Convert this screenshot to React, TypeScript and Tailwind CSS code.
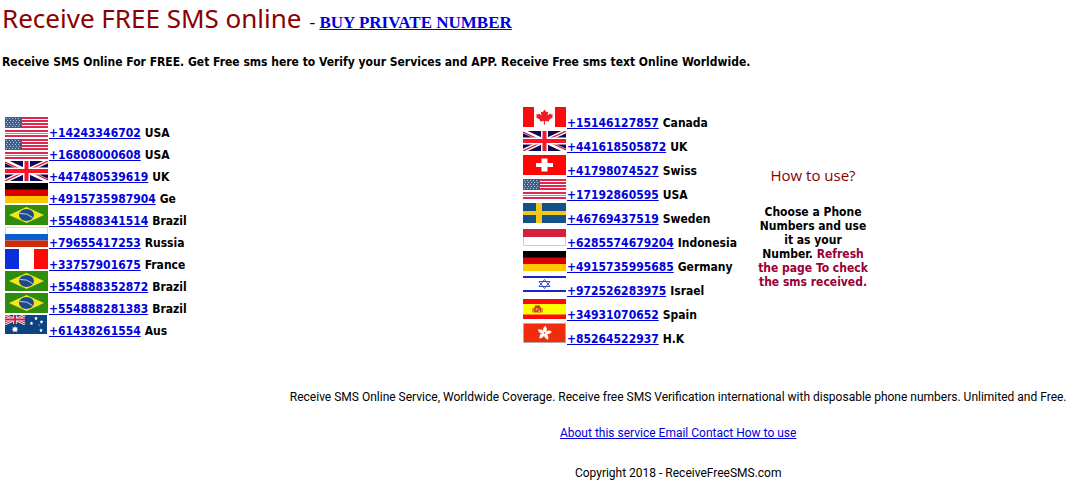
import type { ReactNode } from "react";

type FlagCode = "us" | "gb" | "de" | "br" | "ru" | "fr" | "au" | "ca" | "ch" | "se" | "id" | "il" | "es" | "hk";

interface PhoneNumber {
  number: string;
  country: string;
  flag: FlagCode;
}

const leftNumbers: PhoneNumber[] = [
  { number: "+14243346702", country: "USA", flag: "us" },
  { number: "+16808000608", country: "USA", flag: "us" },
  { number: "+447480539619", country: "UK", flag: "gb" },
  { number: "+4915735987904", country: "Ge", flag: "de" },
  { number: "+554888341514", country: "Brazil", flag: "br" },
  { number: "+79655417253", country: "Russia", flag: "ru" },
  { number: "+33757901675", country: "France", flag: "fr" },
  { number: "+554888352872", country: "Brazil", flag: "br" },
  { number: "+554888281383", country: "Brazil", flag: "br" },
  { number: "+61438261554", country: "Aus", flag: "au" },
];

const rightNumbers: PhoneNumber[] = [
  { number: "+15146127857", country: "Canada", flag: "ca" },
  { number: "+441618505872", country: "UK", flag: "gb" },
  { number: "+41798074527", country: "Swiss", flag: "ch" },
  { number: "+17192860595", country: "USA", flag: "us" },
  { number: "+46769437519", country: "Sweden", flag: "se" },
  { number: "+6285574679204", country: "Indonesia", flag: "id" },
  { number: "+4915735995685", country: "Germany", flag: "de" },
  { number: "+972526283975", country: "Israel", flag: "il" },
  { number: "+34931070652", country: "Spain", flag: "es" },
  { number: "+85264522937", country: "H.K", flag: "hk" },
];

const flags: Record<FlagCode, ReactNode> = {
  us: (
    <>
      <path fill="#fff" d="M0 0h43v20H0z" />
      <path stroke="#dc2a4e" strokeWidth="2" d="M0 1h43M0 4h43M0 7h43M0 10h43M0 14h43M0 19h43" />
      <path stroke="#e8708a" strokeWidth="1" d="M0 16.5h43" />
      <path fill="#3f5f8c" d="M0 0h17v11H0z" />
      <path stroke="#b4c3d8" strokeWidth="1" strokeDasharray="1 2" d="M1 1.5h15M2 3.5h15M1 5.5h15M2 7.5h15M1 9.5h15" />
    </>
  ),
  gb: (
    <>
      <path fill="#0b0b5c" d="M0 0h43v20H0z" />
      <path stroke="#fff" strokeWidth="4" d="m0 0 43 20M43 0 0 20" />
      <path stroke="#e0142c" strokeWidth="1.3" d="m0 1 21 9.8M43 0 22 9.8M0 20l21-10M43 19 22 9" />
      <path stroke="#fff" strokeWidth="7" d="M21.5 0v20M0 10h43" />
      <path stroke="#fa1428" strokeWidth="4" d="M21.5 0v20M0 10h43" />
    </>
  ),
  de: (
    <>
      <path fill="#000" d="M0 0h43v7H0z" />
      <path fill="#dc0000" d="M0 6.5h43v7H0z" />
      <path fill="#ffc800" d="M0 13h43v7H0z" />
    </>
  ),
  br: (
    <>
      <path fill="#2f8c0c" d="M0 0h43v20H0z" />
      <path fill="#f2e61c" d="M4 10 21.5 2 39 10 21.5 18z" />
      <ellipse cx="21.5" cy="10" rx="7.5" ry="6" fill="#1c4a8c" />
      <path stroke="#b9d0e0" strokeWidth="1" fill="none" d="M15 8.5q7-.8 12.5 4" />
    </>
  ),
  ru: (
    <>
      <path fill="#fff" stroke="#ccc" strokeWidth=".8" d="M.4.4h42.2v8H.4z" />
      <path fill="#0a5fce" d="M0 7h43v6.5H0z" />
      <path fill="#cc2c08" d="M0 13.5h43V20H0z" />
    </>
  ),
  fr: (
    <>
      <path fill="#fff" d="M0 0h43v20H0z" />
      <path fill="#0a2fd8" d="M0 0h14v20H0z" />
      <path fill="#ff0808" d="M29 0h14v20H29z" />
    </>
  ),
  au: (
    <>
      <path fill="#0d4380" d="M0 0h42v19H0z" />
      <path stroke="#e8e4f0" strokeWidth="2.6" d="m0 0 20 9M20 0 0 9" />
      <path stroke="#d0304c" strokeWidth="1" d="m0 0 20 9M20 0 0 9" />
      <path stroke="#f0e8f0" strokeWidth="3.6" d="M10 0v9M0 4.5h20" />
      <path stroke="#d42040" strokeWidth="2" d="M10 0v9M0 4.5h20" />
      <path
        fill="#fff"
        d="m10 11 .8 1.7 1.9-.5-.8 1.7 1.6 1-1.9.5.2 1.9-1.8-1-1.8 1 .2-1.9-1.9-.5 1.6-1-.8-1.7 1.9.5zM31 1.500l.6 1.100 1.200.2-.9.900.2 1.300-1.100-.6-1.100.6.200-1.300-.9-.9 1.200-.2zM26.500 6.500l.6 1.100 1.200.2-.9.900.2 1.300-1.100-.6-1.100.6.200-1.300-.9-.9 1.200-.2zM36.500 5l.6 1.100 1.200.2-.9.900.2 1.300-1.100-.6-1.100.6.200-1.300-.9-.9 1.200-.2zM36 13.500l.6 1.100 1.200.2-.9.900.2 1.300-1.100-.6-1.100.6.200-1.300-.9-.9 1.200-.2z"
      />
      <circle cx="34" cy="10" r=".6" fill="#fff" />
    </>
  ),
  ca: (
    <>
      <path fill="#fff" d="M0 0h43v20H0z" />
      <path fill="#fa0c0c" d="M0 0h11v20H0zM32 0h11v20H32z" />
      <path
        fill="#ee1c24"
        d="m21.5 2.5 1.9 2.8 1.8-.8-.6 4 2.6-2.2.5 1.3 2.3-.3-.9 2 1 .8-4.2 3 .4 1.5-4.3-.6.1 3.5h-1.2l.1-3.5-4.3.6.4-1.5-4.2-3 1-.8-.9-2 2.3.3.5-1.3 2.6 2.2-.6-4 1.8.8z"
      />
    </>
  ),
  ch: (
    <>
      <path fill="#ff0505" d="M0 0h43v20H0z" />
      <path fill="#fff" d="M18.5 3.5h6V8H30v4h-5.5v4.5h-6V12H13V8h5.5z" />
    </>
  ),
  se: (
    <>
      <path fill="#155189" d="M0 0h43v20H0z" />
      <path fill="#f5c816" d="M13 0h6v20h-6zM0 8h43v4H0z" />
    </>
  ),
  id: (
    <>
      <path fill="#fff" stroke="#ccc" d="M.5 3.5h42v15H.5z" />
      <path fill="#d4203c" d="M0 2h43v8H0z" />
    </>
  ),
  il: (
    <>
      <path fill="#fff" d="M0 0h43v20H0z" />
      <path stroke="#1428c8" strokeWidth="2" d="M0 2h43M0 16h43" />
      <path stroke="#2a3cc4" strokeWidth=".9" fill="none" d="m21.500 4.500 5.500 7H16zM21.500 13.500l5.500-7H16z" />
    </>
  ),
  es: (
    <>
      <path fill="#ff0a0a" d="M0 0h43v20H0z" />
      <path fill="#ffff00" d="M0 5h43v10.5H0z" />
      <path fill="#c8501c" d="M11 8h7v5.5h-7z" />
      <path fill="#d02010" d="M9.5 9h1v4.5h-1zM18.5 9h1v4.5h-1zM12 6.5h5V8h-5z" />
      <path fill="#f4c830" d="M13 9.5h1.5V11H13zM15.5 11.500H17V13h-1.500z" />
    </>
  ),
  hk: (
    <>
      <path fill="#f02c0c" stroke="#b8a8a0" d="M.5.5h42v19H.5z" />
      <g fill="#fff" transform="translate(21.5 10)">
        {[0, 72, 144, 216, 288].map((angle) => (
          <path key={angle} transform={`rotate(${angle})`} d="M0 0C-2-2-2-6 1.5-7.5 1-5.5 3.5-4.5 2-2.5 1.5-1 1-.5 0 0z" />
        ))}
      </g>
      <circle cx="21.5" cy="10" r=".8" fill="#f02c0c" />
    </>
  ),
};

function Flag({ code }: { code: FlagCode }) {
  return (
    <svg className="inline-block h-5 w-[43px] shrink-0" viewBox="0 0 43 20" preserveAspectRatio="none" aria-hidden="true">
      {flags[code]}
    </svg>
  );
}

function NumberRow({ item, className }: { item: PhoneNumber; className: string }) {
  return (
    <li className={`flex items-baseline whitespace-nowrap ${className}`}>
      <Flag code={item.flag} />
      <a href="#" className="mr-1 ml-px text-[#0000dd] underline">
        {item.number}
      </a>
      {item.country}
    </li>
  );
}

export default function App() {
  return (
    <div className="min-h-screen bg-white font-['DejaVu_Sans_Condensed','DejaVu_Sans',sans-serif] text-xs text-black">
      <header className="px-0.5">
        <div className="flex items-baseline gap-2">
          <h1 className="font-['Noto_Sans',sans-serif] text-[26px] leading-9 text-[#8b0000]">Receive FREE SMS online</h1>
          <p className="font-['Liberation_Serif',serif] text-[17px]">
            -{" "}
            <a href="#" className="font-bold text-[#0000dd] underline">
              BUY PRIVATE NUMBER
            </a>
          </p>
        </div>
        <p className="mt-[18px] font-bold">
          Receive SMS Online For FREE. Get Free sms here to Verify your Services and APP. Receive Free sms text Online
          Worldwide.
        </p>
      </header>

      <main className="mt-[37px] grid grid-cols-[518fr_235fr_110fr_200fr] items-center pl-[5px] font-bold">
        <ul>
          {leftNumbers.map((item) => (
            <NumberRow key={item.number} item={item} className="h-[22px]" />
          ))}
        </ul>
        <ul>
          {rightNumbers.map((item) => (
            <NumberRow key={item.number} item={item} className="h-6" />
          ))}
        </ul>
        <section className="text-center">
          <h2 className="mb-5 font-['Open_Sans',sans-serif] text-[15px] leading-5 font-normal text-[#8b0000]">How to use?</h2>
          <p className="leading-[14px]">
            Choose a Phone Numbers and use it as your Number.{" "}
            <span className="text-[#990033]">Refresh the page To check the sms received.</span>
          </p>
        </section>
      </main>

      <footer className="mt-[42px] ml-[27%] text-center font-['Roboto',sans-serif]">
        <p>
          Receive SMS Online Service, Worldwide Coverage. Receive free SMS Verification international with disposable phone
          numbers. Unlimited and Free.
        </p>
        <p className="mt-5">
          <a href="#" className="text-[#0000dd] underline">
            About this service Email Contact How to use
          </a>
        </p>
        <p className="mt-6">Copyright 2018 - ReceiveFreeSMS.com</p>
      </footer>
    </div>
  );
}
